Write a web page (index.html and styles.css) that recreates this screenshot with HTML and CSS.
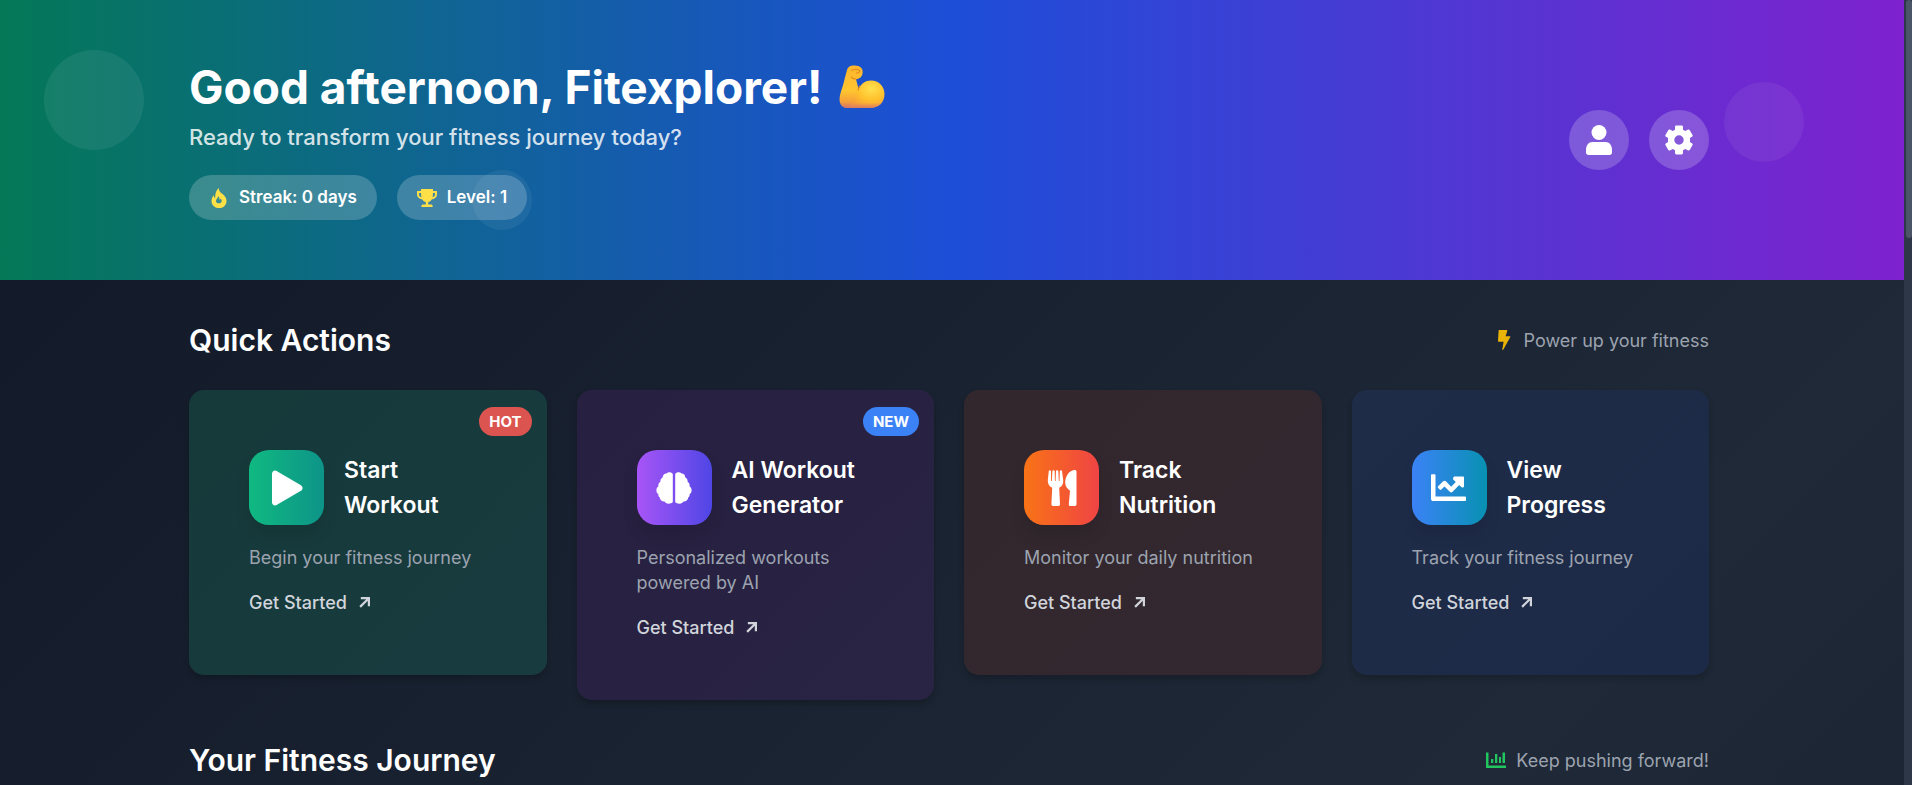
FILE: index.html
```html
<!DOCTYPE html>
<html lang="en">
<head>
<meta charset="utf-8">
<title>Fitness Dashboard</title>
<link rel="stylesheet" href="styles.css">
</head>
<body>
<div class="page">
  <header class="hero">
    <span class="bubble bubble-left"></span>
    <span class="bubble bubble-right"></span>
    <span class="bubble bubble-small"></span>
    <div class="container hero-inner">
      <div>
        <h1 class="hero-title">Good afternoon, Fitexplorer!
          <svg class="emoji" viewBox="0 0 46 44" role="img" aria-label="flexed arm">
            <defs>
              <radialGradient id="bicep" cx="0.62" cy="0.3" r="0.75"><stop offset="0" stop-color="#ffe04f"/><stop offset="0.55" stop-color="#ffc02c"/><stop offset="1" stop-color="#f59a3c"/></radialGradient>
              <linearGradient id="arm" x1="0" y1="0" x2="0" y2="1"><stop offset="0" stop-color="#ffb52e"/><stop offset="0.6" stop-color="#ffc530"/><stop offset="0.85" stop-color="#f6a03a"/><stop offset="1" stop-color="#d87a5e"/></linearGradient>
              <linearGradient id="shade" x1="0" y1="0" x2="0" y2="1"><stop offset="0.7" stop-color="#e0825a" stop-opacity="0"/><stop offset="1" stop-color="#d97a66"/></linearGradient>
            </defs>
            <path fill="url(#arm)" d="M8 5C9 1 13 0 16 .6c5 .2 8.200 3 7.600 7-.2 4-2.500 6.500-6.600 6.600 1 3.500 2 7 2.500 10.500L32 40c-2 3-6 3-10 3H9C4 43 0 40 .6 33 1.200 27 4 22 5.600 14Z"/>
            <path fill="url(#bicep)" d="M11 41 19 26c2-6 6-10.500 13-10.500 8 0 13.500 6 13.500 13.500C45.500 38 39 43 31 43H15Z"/>
            <path fill="url(#shade)" d="M.6 33 15 26l17 6 13.500-3C45.500 38 39 43 31 43H9C4 43 0 40 .6 33Z"/>
            <path fill="none" stroke="#e88a1e" stroke-width="1.200" stroke-linecap="round" d="M13 5.500c2-1.500 5-1.500 7.500 0 1 1-1 2.500-3 2.500M17 14c-2 0-4-.8-4.500-2M19 25l1.500-4"/>
          </svg>
        </h1>
        <p class="hero-subtitle">Ready to transform your fitness journey today?</p>
        <div class="pills">
          <span class="pill">
            <svg class="pill-icon" viewBox="0 0 20 20"><path fill="#fde047" fill-rule="evenodd" d="M9.800 0c0 3 1.400 4.200 3.400 5.800 2.600 2.100 4.300 4.200 4.300 7.200 0 4.200-3.300 7.200-7.500 7.200S2.500 17 2.500 13c0-2.300.8-4.200 2.200-5.800.2 1.600.7 2.400 1.500 2.800C6 6 7 2.300 9.800 0ZM9.400 8.200c-.1 1.600-2.400 2.600-2.400 4.800 0 1.400 1.200 2.300 2.700 2.300 1.700 0 3-1 3-2.600 0-1-.5-1.700-1.200-2-.2.700-.6 1-1.200 1 .3-1.400 0-2.700-.9-3.500Z"/></svg>
            Streak: 0 days</span>
          <span class="pill">
            <svg class="pill-icon" viewBox="0 0 20 20"><path fill="#fde047" fill-rule="evenodd" d="M4 1h12v2h4v3.500c0 2.700-2 4.500-5.300 4.900-.9 1.500-2 2.300-3.500 2.600v2.500H14c1 0 1.600.7 1.600 1.500v1H4.400v-1c0-.8.6-1.500 1.600-1.500h2.800V14c-1.500-.3-2.600-1.100-3.500-2.600C2 11 0 9.200 0 6.500V3h4Zm0 4H2v1.500c0 1.300.9 2.300 2.500 2.700C4.100 8 4 6.500 4 5Zm12 0c0 1.500-.1 3-.5 4.200C17.100 8.800 18 7.800 18 6.500V5Z"/></svg>
            Level: 1</span>
        </div>
      </div>
      <div class="hero-actions">
        <button class="round-button" aria-label="Profile"><svg width="30" height="30" viewBox="0 0 30 30" fill="#fff"><circle cx="15" cy="7.500" r="7.500"/><path d="M8.500 17h13c4 0 6.500 3.500 6.500 8v2.500c0 1.500-1 2.500-2.500 2.500h-21C3 30 2 29 2 27.500V25c0-4.500 2.500-8 6.500-8Z"/></svg></button>
        <button class="round-button" aria-label="Settings"><svg width="30" height="30" viewBox="0 0 30 30"><path fill="#fff" fill-rule="evenodd" d="M11 2.300C11 1 11.500.6 12.500.6h5c1 0 1.500.5 1.500 1.700v2.500l2.300 1.300 2.300-1.300c1-.5 1.700-.3 2.300.6l2.500 4.300c.5.9.4 1.500-.5 2.100l-2 1.300c.2 1.300.2 2.600 0 3.900l2 1.200c.9.600 1 1.200.5 2.100l-2.500 4.400c-.6.900-1.300 1-2.300.5l-2.300-1.300-2.300 1.300v2.600c0 1.200-.5 1.700-1.500 1.700h-5c-1 0-1.500-.5-1.500-1.700v-2.600l-2.300-1.300-2.300 1.300c-1 .5-1.700.4-2.300-.5L1.600 20.300c-.5-.9-.4-1.500.5-2.100l2-1.200a13 13 0 0 1 0-3.900l-2-1.300c-.9-.6-1-1.200-.5-2.100l2.500-4.300c.6-.9 1.300-1.100 2.300-.6l2.300 1.300L11 4.800ZM15 10.300a4.700 4.700 0 1 0 0 9.400 4.700 4.700 0 0 0 0-9.400Z"/></svg></button>
      </div>
    </div>
  </header>
  <main class="content">
    <section class="container section">
      <div class="section-head">
        <h2 class="section-title">Quick Actions</h2>
        <p class="section-note"><svg class="note-icon" viewBox="0 0 20 20"><path fill="#eab308" d="M5.200 0h7.600c.4 0 .6.300.5.700L11.600 6.200h4.200c.5 0 .7.400.5.900L9.400 19.600c-.4.600-1.200.4-1.100-.3l1.300-7.500H4.700c-.5 0-.8-.4-.7-.9L4.600.6c0-.4.2-.6.6-.6Z"/></svg>Power up your fitness</p>
      </div>
      <div class="cards">
        <article class="card card-green">
          <span class="badge badge-hot">HOT</span>
          <div class="card-head">
            <span class="tile tile-green"><svg width="36" height="36" viewBox="0 0 36 36"><path fill="#fff" d="M3 4C3 1 5.500-.2 8 1.200l23.500 13.700c2.800 1.700 2.800 4.500 0 6.200L8 34.800C5.500 36.200 3 35 3 32Z"/></svg></span>
            <h3 class="card-title">Start Workout</h3>
          </div>
          <p class="card-text">Begin your fitness journey</p>
          <a class="card-link" href="#">Get Started<svg class="arrow" viewBox="0 0 12 12"><path d="M2 1.200h8.800V10M10.400 1.600 1.200 10.800"/></svg></a>
        </article>
        <article class="card card-purple">
          <span class="badge badge-new">NEW</span>
          <div class="card-head">
            <span class="tile tile-purple"><svg width="36" height="32" viewBox="0 0 36 32" fill="#fff"><path d="M16.800 2v28c-.8 1.300-2.300 1.700-4.300 1.700-2 0-3.200-1-4-2.200-2.600.2-4.600-1.500-4.800-4.200-1-.7-1.500-1.800-1.300-3.300C.9 21.500.4 20 .4 18.300c0-1.800.8-3 2-3.700-.3-2.500.5-4 2-4.900C4.200 7.600 5 6.200 6.600 5.400 7 2.800 8.300 1.700 10.300 1.500 12.500-.5 15.500 0 16.800 2Z"/><path d="M19.200 2v28c.8 1.300 2.300 1.700 4.300 1.700 2 0 3.200-1 4-2.200 2.600.2 4.600-1.500 4.800-4.200 1-.7 1.500-1.800 1.300-3.300 1.500-.5 2-2 2-3.700 0-1.800-.8-3-2-3.700.3-2.500-.5-4-2-4.900.2-2.100-.6-3.500-2.200-4.300-.4-2.600-1.700-3.700-3.700-3.900C23.500-.5 20.500 0 19.200 2Z"/></svg></span>
            <h3 class="card-title">AI Workout Generator</h3>
          </div>
          <p class="card-text">Personalized workouts powered by AI</p>
          <a class="card-link" href="#">Get Started<svg class="arrow" viewBox="0 0 12 12"><path d="M2 1.200h8.800V10M10.400 1.600 1.200 10.800"/></svg></a>
        </article>
        <article class="card card-orange">
          <div class="card-head">
            <span class="tile tile-orange"><svg width="30" height="36" viewBox="0 0 30 36" fill="#fff"><path d="M1.800 1C2 0 3.900 0 4 1v10h.8L5.400 1c.1-1 2.200-1 2.300 0l.2 10h.7L9 1c.1-1 2.200-1 2.300 0l.5 10h.7l.3-10c.1-1 2-1 2.200 0l1.200 9c.4 3.600-1 6.500-4 7.800l.8 16.500c0 1-.6 1.700-1.700 1.700H6.100c-1.100 0-1.700-.7-1.700-1.700l.8-16.500c-3-1.300-4.700-4.200-4.400-7.800Z"/><path d="M27.500 0c1.400 0 2 .7 2 1.700v32.600c0 1-.6 1.700-1.700 1.700h-4.300c-1.200 0-1.800-.7-1.700-1.800l1.200-13.500c-3-2.200-4.600-4.600-4.800-7.700C18 7 21.500.5 27.500 0Z"/></svg></span>
            <h3 class="card-title">Track Nutrition</h3>
          </div>
          <p class="card-text">Monitor your daily nutrition</p>
          <a class="card-link" href="#">Get Started<svg class="arrow" viewBox="0 0 12 12"><path d="M2 1.200h8.800V10M10.400 1.600 1.200 10.800"/></svg></a>
        </article>
        <article class="card card-blue">
          <div class="card-head">
            <span class="tile tile-blue"><svg width="36" height="28" viewBox="0 0 36 28"><path fill="#fff" d="M1.100.2h2.300c.7 0 1.100.4 1.100 1.100v21.200h29.400c.7 0 1.100.4 1.100 1.100v2.300c0 .7-.4 1.100-1.100 1.100H2.300C.9 27 0 26.100 0 24.700V1.300C0 .6.400.2 1.100.2ZM23.500 2.500h8.400c.7 0 1.100.4 1.100 1.100V12c0 1.500-1.700 2.100-2.800 1.100l-2-2-6.600 6.700c-.9.900-1.900.9-2.800 0l-5.300-5.400-3.200 3.100c-.5.500-1.100.5-1.600 0l-1.600-1.600c-.5-.5-.5-1.100 0-1.600l5-5c.9-.9 1.900-.9 2.800 0l5.300 5.400 4.600-4.600-2.100-2c-1.100-1.100-.5-3.600.8-3.600Z"/></svg></span>
            <h3 class="card-title">View Progress</h3>
          </div>
          <p class="card-text">Track your fitness journey</p>
          <a class="card-link" href="#">Get Started<svg class="arrow" viewBox="0 0 12 12"><path d="M2 1.200h8.800V10M10.400 1.600 1.200 10.800"/></svg></a>
        </article>
      </div>
    </section>
    <section class="container section">
      <div class="section-head">
        <h2 class="section-title">Your Fitness Journey</h2>
        <p class="section-note"><svg class="note-icon" viewBox="0 0 20 20"><path fill="#22c55e" d="M0 2.500h2.500v13H20V18H0ZM5 9h2.300v4H5ZM9 4h2.300v9H9ZM13 7h2v6h-2ZM16.500 2.500H19V13h-2.500Z"/></svg>Keep pushing forward!</p>
      </div>
    </section>
  </main>
</div>
<div class="scroll-track"><div class="scroll-thumb"></div></div>
</body>
</html>
```

FILE: styles.css
```css
* { box-sizing: border-box; }

body {
  margin: 0;
  display: flex;
  height: 100vh;
  overflow: hidden;
  font-family: Inter, "Liberation Sans", sans-serif;
  font-size: 18px;
  line-height: 25px;
  color: #fff;
  background: #111827;
}

h1, h2, h3, p { margin: 0; }

.page {
  flex: 1;
  height: 100%;
  overflow: hidden;
  display: flex;
  flex-direction: column;
  background: linear-gradient(135deg, #111827, #1f2937 50%, #111827) 0 0 / 100% 330vh no-repeat;
}

.container {
  width: 90%;
  max-width: 1520px;
  margin: 0 auto;
}

.hero {
  position: relative;
  flex-shrink: 0;
  padding: 60px 6px 60px 0;
  background: linear-gradient(90deg, #047857, #1d4ed8 50%, #7e22ce);
}

.hero-inner {
  position: relative;
  display: flex;
  align-items: center;
  justify-content: space-between;
}

.bubble {
  position: absolute;
  border-radius: 50%;
  background: #fff;
}
.bubble-left { left: 44px; top: 50px; width: 100px; height: 100px; opacity: 0.07; }
.bubble-right { right: 100px; top: 82px; width: 80px; height: 80px; opacity: 0.06; }
.bubble-small { left: 472px; bottom: 50px; width: 60px; height: 60px; opacity: 0.06; }

.hero-title {
  display: flex;
  align-items: center;
  gap: 17px;
  font-size: 46px;
  line-height: 54px;
  font-weight: 700;
}
.emoji { width: 46px; height: 44px; }

.hero-subtitle {
  margin-top: 6px;
  font-size: 22px;
  font-weight: 500;
  line-height: 35px;
  color: rgba(255, 255, 255, 0.84);
}

.pills { display: flex; gap: 20px; margin-top: 20px; }

.pill {
  display: flex;
  align-items: center;
  gap: 10px;
  height: 45px;
  padding: 0 20px;
  border-radius: 23px;
  background: rgba(255, 255, 255, 0.2);
  font-size: 17px;
  font-weight: 600;
}
.pill-icon { width: 20px; height: 20px; }

.hero-actions { display: flex; gap: 20px; }

.round-button {
  display: grid;
  place-items: center;
  width: 60px;
  height: 60px;
  padding: 0;
  border: 0;
  border-radius: 50%;
  background: rgba(255, 255, 255, 0.2);
}

.content { padding: 40px 6px 0 0; }
.section { margin-bottom: 40px; }

.section-head {
  display: flex;
  align-items: center;
  justify-content: space-between;
  margin-bottom: 30px;
}
.section-title { font-size: 30px; line-height: 40px; font-weight: 600; }
.section-note { display: flex; align-items: center; gap: 10px; color: #9ca3af; }
.note-icon { width: 20px; height: 20px; }

.cards {
  display: grid;
  grid-template-columns: repeat(4, 1fr);
  gap: 30px;
  align-items: start;
}

.card {
  position: relative;
  padding: 60px;
  border-radius: 15px;
  box-shadow: 0 4px 6px rgba(0, 0, 0, 0.2);
}
.card-green { background: linear-gradient(135deg, #163a3a, #183b3f); }
.card-purple { background: linear-gradient(135deg, #272040, #292344); }
.card-orange { background: linear-gradient(135deg, #31272d, #33282f); }
.card-blue { background: linear-gradient(135deg, #1f2c48, #1d2a47); }

.card-head { display: flex; align-items: center; gap: 20px; margin-bottom: 20px; }

.tile {
  flex: none;
  display: grid;
  place-items: center;
  width: 75px;
  height: 75px;
  border-radius: 20px;
  box-shadow: 0 10px 15px rgba(0, 0, 0, 0.1);
}
.tile-green { background: linear-gradient(90deg, #10b981, #0d9488); }
.tile-purple { background: linear-gradient(90deg, #a855f7, #4f46e5); }
.tile-orange { background: linear-gradient(90deg, #f97316, #ef4444); }
.tile-blue { background: linear-gradient(90deg, #3b82f6, #0891b2); }

.card-title { font-size: 23px; line-height: 35px; font-weight: 600; }
.card-text { margin-bottom: 20px; color: #9ca3af; }
.card-link {
  display: flex;
  align-items: center;
  gap: 12px;
  color: #d1d5db;
  font-weight: 500;
  text-decoration: none;
}
.arrow { width: 11px; height: 11px; fill: none; stroke: currentColor; stroke-width: 2.4; }

.badge {
  position: absolute;
  top: 17px;
  right: 15px;
  height: 29px;
  padding: 0 10px;
  border-radius: 15px;
  font-size: 15px;
  line-height: 29px;
  font-weight: 700;
}
.badge-hot { background: #dc5450; }
.badge-new { background: #3b82f6; }

.scroll-track { flex: none; width: 8px; padding-left: 2px; background: #2d3748; }
.scroll-thumb { height: 238px; border-radius: 3px; background: #4a5568; }
```
